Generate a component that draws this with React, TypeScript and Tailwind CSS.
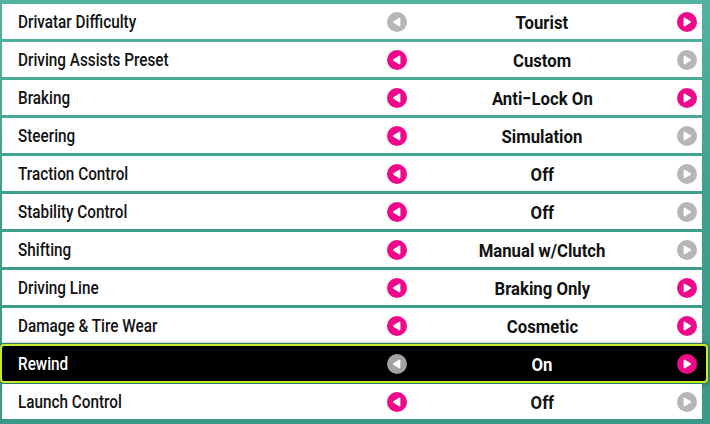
import React from 'react'

type Side = 'on' | 'off'

interface Setting {
  label: string
  value: string
  left: Side
  right: Side
  selected?: boolean
}

const settings: Setting[] = [
  { label: 'Drivatar Difficulty', value: 'Tourist', left: 'off', right: 'on' },
  { label: 'Driving Assists Preset', value: 'Custom', left: 'on', right: 'off' },
  { label: 'Braking', value: 'Anti\u2212Lock On', left: 'on', right: 'on' },
  { label: 'Steering', value: 'Simulation', left: 'on', right: 'off' },
  { label: 'Traction Control', value: 'Off', left: 'on', right: 'off' },
  { label: 'Stability Control', value: 'Off', left: 'on', right: 'off' },
  { label: 'Shifting', value: 'Manual w/Clutch', left: 'on', right: 'off' },
  { label: 'Driving Line', value: 'Braking Only', left: 'on', right: 'on' },
  { label: 'Damage & Tire Wear', value: 'Cosmetic', left: 'on', right: 'on' },
  { label: 'Rewind', value: 'On', left: 'off', right: 'on', selected: true },
  { label: 'Launch Control', value: 'Off', left: 'on', right: 'off' },
]

// Round arrow button: pink when that direction still has options, grey when not.
function Arrow({ dir, state, dark }: { dir: 'left' | 'right'; state: Side; dark?: boolean }) {
  const fill = state === 'on' ? '#f0088a' : dark ? '#a3a3a3' : '#b6b6b6'
  const points = dir === 'left' ? '12.6,6.4 12.6,13.6 6.8,10' : '7.4,6.4 7.4,13.6 13.2,10'
  return (
    <svg width="20" height="20" viewBox="0 0 20 20" className="shrink-0">
      <circle cx="10" cy="10" r="10" fill={fill} />
      <polygon points={points} fill="#fff" stroke="#fff" strokeWidth="1.6" strokeLinejoin="round" />
    </svg>
  )
}

function Row({ s }: { s: Setting }) {
  const dark = !!s.selected
  return (
    <div
      className={`relative flex h-[35px] items-center pl-[16px] pr-[5px] ${
        dark ? 'bg-black text-white' : 'bg-white text-[#121212]'
      }`}
    >
      {dark && (
        <span className="pointer-events-none absolute -top-[2px] -bottom-[2px] -left-[2px] -right-[6px] rounded-[4px] border-[2.5px] border-[#c4ec2c] bg-black shadow-[0_0_4px_rgba(0,0,0,0.6)]" />
      )}
      <div className="relative flex-1 min-w-0 pt-[2px]">
        <span className="inline-block origin-left scale-x-[0.85] whitespace-nowrap text-[18px] leading-[20px] font-medium">
          {s.label}
        </span>
      </div>
      <div className="relative flex w-[310px] items-center">
        <Arrow dir="left" state={s.left} dark={dark} />
        <div className="flex flex-1 justify-center pt-[2px]">
          <span className="inline-block scale-x-[0.88] whitespace-nowrap text-[19px] leading-[20px] font-bold">
            {s.value}
          </span>
        </div>
        <Arrow dir="right" state={s.right} dark={dark} />
      </div>
    </div>
  )
}

export default function App() {
  return (
    <div
      className="h-[424px] w-[710px] overflow-hidden bg-gradient-to-b from-[#52b3a1] via-[#3f9f8c] to-[#3a9886] pt-[4px] pl-[2px] pr-[8px]"
      style={{ fontFamily: 'Roboto, "Liberation Sans", sans-serif' }}
    >
      <div className="flex flex-col gap-[3px]">
        {settings.map((s) => (
          <Row key={s.label} s={s} />
        ))}
      </div>
    </div>
  )
}
